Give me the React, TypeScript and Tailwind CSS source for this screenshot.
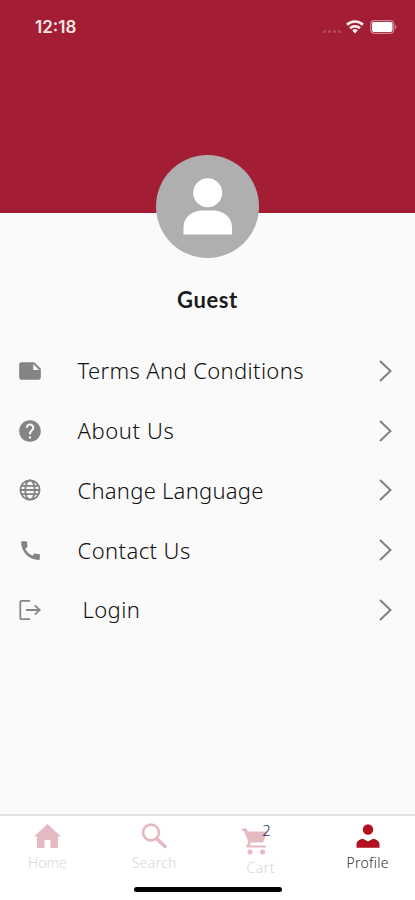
import React from 'react';
import { MdNote, MdHelp, MdCall } from 'react-icons/md';

const GlobeIcon = () => (
  <svg width="22" height="22" viewBox="0 0 22 22" fill="none" stroke="#828282" strokeWidth="1.8">
    <circle cx="11" cy="11" r="9.6" />
    <ellipse cx="11" cy="11" rx="4.8" ry="9.6" />
    <path d="M1.400 11h19.200M3 6.800h16M3 15.200h16" />
  </svg>
);

const LoginIcon = () => (
  <svg width="22" height="22" viewBox="0 0 22 22" fill="none" stroke="#868686" strokeWidth="1.8">
    <path d="M11 1.800H2.600Q1.300 1.800 1.300 3.100v15.800q0 1.300 1.300 1.300H11" />
    <path d="M7 11h13.500M15.800 6.300l4.900 4.700-4.900 4.700" />
  </svg>
);

const menuItems = [
  { label: 'Terms And Conditions', icon: <MdNote size={26} />, text: 'tracking-[0.36px]' },
  { label: 'About Us', icon: <MdHelp size={26} />, text: 'tracking-[0.6px]' },
  { label: 'Change Language', icon: <GlobeIcon />, text: 'tracking-[0.25px]' },
  { label: 'Contact Us', icon: <MdCall size={25} />, text: 'tracking-[0.42px]' },
  { label: 'Login', icon: <LoginIcon />, text: 'tracking-[0.4px] pl-[5px]' }
];

const StatusBar = () => (
  <div className="flex justify-between pl-[35px] pr-[18px] pt-[17px]">
    <span className="font-['Inter',sans-serif] text-[17px] font-semibold leading-5 text-[#fbe6e5]">12:18</span>
    <div className="flex h-5 items-center">
      <div className="mr-[5px] mt-[8px] flex gap-[2px]">
        {[0, 1, 2, 3].map((dot) => (
          <span key={dot} className="size-[3px] rounded-full bg-[#b84c5e]" />
        ))}
      </div>
      <svg width="18" height="14" viewBox="0 0 18 14" fill="none" stroke="#fff3f1" strokeWidth="2.600">
        <path d="M1 4.800a11.500 11.500 0 0 1 16 0M4 8.300a7.300 7.300 0 0 1 10 0" />
        <path d="M6.200 10.300a4 4 0 0 1 5.600 0L9 13.500z" fill="#fff3f1" stroke="none" />
      </svg>
      <svg className="ml-[6px]" width="27" height="14" viewBox="0 0 27 14">
        <rect x="0.700" y="0.700" width="23" height="12.600" rx="3.500" fill="none" stroke="#cf8590" strokeWidth="1.200" />
        <rect x="2" y="2" width="20.500" height="10" rx="2" fill="#fff" />
        <path d="M25 4.800q1.600.6 1.600 2.200T25 9.200z" fill="#cf8590" />
      </svg>
    </div>
  </div>
);

const App: React.FC = () => {
  return (
    <div className="flex h-[900px] w-[415px] flex-col overflow-hidden bg-[#fafafa] font-['Noto_Sans',sans-serif]">
      <header className="h-[213px] shrink-0 bg-[#a31e34]">
        <StatusBar />
      </header>

      <div className="relative mt-[-58px] flex flex-col items-center">
        <div className="size-[103px] rounded-full bg-[#afafaf]">
          <svg viewBox="0 0 103 103" fill="#fff">
            <circle cx="51.700" cy="37.700" r="14.500" />
            <path d="M27.500 79.500V72c0-10 9-16.500 19-16.500h10.500c10 0 19 6.500 19 16.500v7.500z" />
          </svg>
        </div>
        <h1 className="mt-[27px] font-['Lato',sans-serif] text-[22px] font-bold leading-[30px] tracking-[0.6px] text-[#1b1b1b]">Guest</h1>
      </div>

      <nav className="mt-[26px] flex-1">
        {menuItems.map((item) => (
          <button key={item.label} className="flex h-[59.750px] w-full items-center pl-[17px] pr-[22px] text-left">
            <span className="flex w-[26px] justify-center text-[#848484]">{item.icon}</span>
            <span className="ml-[34.500px] flex-1 text-[22px] font-light text-[#101010]">
              <span className={item.text}>{item.label}</span>
            </span>
            <svg width="14" height="22" viewBox="0 0 14 22" fill="none" stroke="#808080" strokeWidth="2">
              <path d="M1 1l10.500 10-10.500 10" />
            </svg>
          </button>
        ))}
      </nav>

      <footer className="h-[86px] shrink-0 border-t-2 border-[#e2e2e2] bg-white">
        <div className="mx-[-6px] grid h-[70px] grid-cols-4 text-[14px] font-light leading-[18px] text-[#d8d8d8]">
          <div className="flex flex-col items-center pt-[7px]">
            <svg width="27" height="26" viewBox="0 0 27 26" fill="#e4b9c1">
              <path d="M13.500 1L27 13.500h-3V25h-7.500v-8h-6v8H3V13.500H0z" />
            </svg>
            <span className="mt-[5px]">Home</span>
          </div>
          <div className="flex flex-col items-center pt-[7px]">
            <svg width="27" height="26" viewBox="0 0 27 26" fill="none" stroke="#e4b9c1">
              <circle cx="10" cy="9.500" r="7.900" strokeWidth="2.600" />
              <path d="M15.500 15.500l9.500 9" strokeWidth="3.600" />
            </svg>
            <span className="mt-[5px] tracking-[0.3px]">Search</span>
          </div>
          <div className="flex flex-col items-center pt-[12px]">
            <div className="relative mr-3">
              <svg width="26" height="28" viewBox="0 0 26 28" fill="#e4b9c1">
                <path d="M0 .5h4.500L6 3.500h19.500l-4.500 11H9l-1.500 3H24v2H5.500L4 18.500l2.500-4.500L2 3H0z" />
                <circle cx="8" cy="24" r="2.500" />
                <circle cx="20.500" cy="24" r="2.500" />
              </svg>
              <span className="absolute right-[-3px] top-[-7px] text-[15px] font-light text-[#30306e]">2</span>
            </div>
            <span className="mt-[3px] tracking-[0.5px]">Cart</span>
          </div>
          <div className="flex flex-col items-center pt-[7px] text-[#303030]">
            <svg width="24" height="26" viewBox="0 0 24 26" fill="#b2111f">
              <circle cx="12" cy="6.500" r="5.200" />
              <path d="M0.500 24.800V21c0-3 3.500-5 7-5L12 18.500l4.500-2.500c3.500 0 7 2 7 5v3.800z" />
            </svg>
            <span className="mt-[5px] tracking-[0.3px]">Profile</span>
          </div>
        </div>
        <div className="mx-auto mt-px h-[5px] w-[148px] rounded-full bg-black" />
      </footer>
    </div>
  );
};

export default App;
